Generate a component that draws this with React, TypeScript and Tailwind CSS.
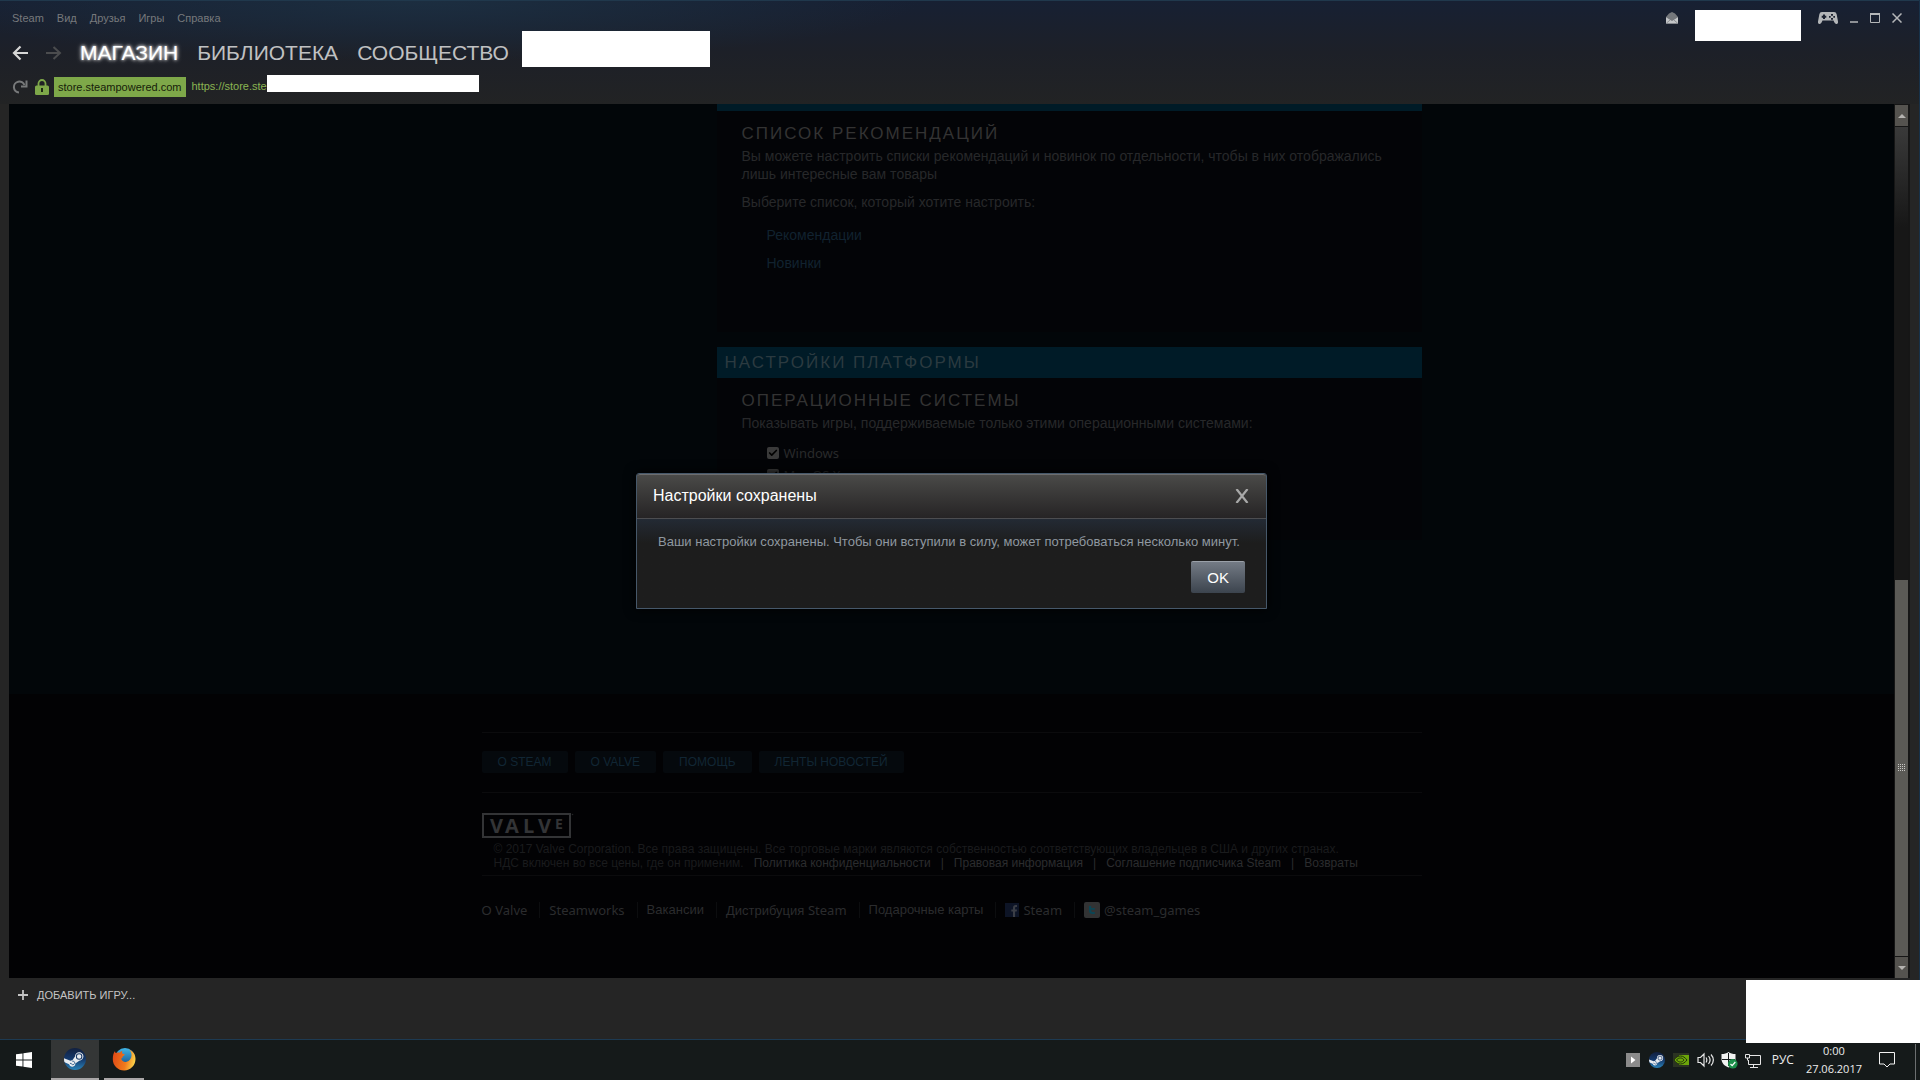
import type { ReactNode } from 'react';
import { Check } from 'lucide-react';

const menuItems = ['Steam', 'Вид', 'Друзья', 'Игры', 'Справка'];
const footerButtons = ['О STEAM', 'О VALVE', 'ПОМОЩЬ', 'ЛЕНТЫ НОВОСТЕЙ'];
const legalLinks = [
  'Политика конфиденциальности',
  'Правовая информация',
  'Соглашение подписчика Steam',
  'Возвраты',
];

function SteamLogo({ id, className }: { id: string; className: string }) {
  return (
    <svg viewBox="0 0 24 24" className={className} aria-hidden="true">
      <defs>
        <linearGradient id={id} x1="0" y1="0" x2="0" y2="1">
          <stop offset="0" stopColor="#12203f" />
          <stop offset="0.5" stopColor="#14386b" />
          <stop offset="1" stopColor="#2b83b8" />
        </linearGradient>
        <clipPath id={`${id}-clip`}>
          <circle cx="12" cy="12" r="12" />
        </clipPath>
      </defs>
      <circle cx="12" cy="12" r="12" fill={`url(#${id})`} />
      <g clipPath={`url(#${id}-clip)`}>
        <path d="M0 11.2 7 14a3.6 3.6 0 0 1 2-.5l3-4.3a4.6 4.6 0 1 1 4.700 4.600l-4.300 3.100a3.500 3.500 0 0 1-6.900.8L0 15.400Z" fill="#e8ebef" />
        <circle cx="16.500" cy="9.200" r="3" fill="#e8ebef" stroke="#1a3a68" strokeWidth="1.100" />
        <path d="m6.500 16.600 1.700.7a1.900 1.900 0 1 0 .9-2.800" fill="none" stroke="#1a4a7c" strokeWidth="0.900" />
      </g>
    </svg>
  );
}

function FirefoxLogo() {
  return (
    <svg viewBox="0 0 24 24" className="size-6" aria-hidden="true">
      <defs>
        <linearGradient id="globe" x1="0" y1="0" x2="0" y2="1">
          <stop offset="0" stopColor="#3fb6e8" />
          <stop offset="1" stopColor="#12427e" />
        </linearGradient>
        <linearGradient id="fox" x1="0" y1="0.300" x2="1" y2="0.500">
          <stop offset="0" stopColor="#e04a16" />
          <stop offset="0.600" stopColor="#f07a1c" />
          <stop offset="1" stopColor="#fbd44a" />
        </linearGradient>
      </defs>
      <circle cx="13" cy="11" r="10" fill="url(#globe)" />
      <path
        d="M3 4c0 1 .3 1.600.7 2.100C5 5.300 6.500 5.300 7.900 5.700c.5-.9 1.500-1.700 2.600-2-.8 1.200-.6 2.200.2 3 .9.300 1.800.3 2 .7-.2 1.200-1.700 1.500-2.300 2.300.3 1-.4 1.700-1.300 1.800.6 2.700 3 4 5.600 3.300 2.700-.7 4.700-3 4.800-6 .2-2.600-.8-4.600-2.500-6.200C21 4.200 23.500 7.500 23.500 12c0 6.300-5 11.500-11.300 11.500S.8 18.400.8 12.200C.8 9.300 1.300 6.200 3 4Z"
        fill="url(#fox)"
      />
    </svg>
  );
}

function TitleBar() {
  return (
    <div className="flex h-[34px] items-center justify-between pl-3 pr-[17px]">
      <nav className="flex gap-[13px] text-[11px] text-[#77797c]">
        {menuItems.map((item) => (
          <a key={item} href="#">
            {item}
          </a>
        ))}
      </nav>
      <div className="flex h-full items-center text-[#b4b6b8]">
        <button type="button" aria-label="Inbox">
          <svg viewBox="0 0 12 12" className="size-3">
            <path d="M0 5 3 1.500 6 0l3 1.500L12 5v6.500H0Z" fill="#74777b" />
            <path d="M0 5.200 6 9l6-3.800v6.300H0Z" fill="#c4c6c8" />
            <path d="M.5 11 4.200 8M11.500 11 7.800 8" stroke="#74777b" strokeWidth="0.700" />
          </svg>
        </button>
        <div className="ml-[17px] mt-[9px] h-[31px] w-[106px] self-start bg-white" />
        <button type="button" aria-label="Big Picture" className="ml-[17px]">
          <svg viewBox="0 0 20 12" className="w-5">
            <path
              d="M4 0h12c1.500 0 2.300.8 2.700 2.500L20 9.500c.2 1.500-.5 2.500-1.500 2.500-1.200 0-1.800-.8-3-3.500h-11C3.300 11.200 2.700 12 1.500 12 .5 12-.2 11 0 9.500l1.300-7C1.700.8 2.500 0 4 0Z"
              fill="#b4b6b8"
            />
            <path d="M5 2.500h2v1.200h1.300v2H7V7H5V5.700H3.700v-2H5ZM13 2h2v1.700h-2Zm0 4h2v1.700h-2Zm-2-2h1.700v1.700H11Zm4.300 0H17v1.700h-1.700Z" fill="#1c2230" />
          </svg>
        </button>
        <button type="button" aria-label="Minimize" className="ml-[11px]">
          <svg viewBox="0 0 10 10" className="size-[10px]">
            <path d="M1 9h8" stroke="currentColor" strokeWidth="1.500" />
          </svg>
        </button>
        <button type="button" aria-label="Maximize" className="ml-[11px]">
          <svg viewBox="0 0 10 10" className="size-[10px]">
            <path d="M.5 1v8.500h9V1" fill="none" stroke="currentColor" />
            <path d="M0 1h10" stroke="currentColor" strokeWidth="2" />
          </svg>
        </button>
        <button type="button" aria-label="Close window" className="ml-3">
          <svg viewBox="0 0 10 10" className="size-[10px]">
            <path d="m.5.500 9 9m0-9-9 9" stroke="currentColor" strokeWidth="1.500" />
          </svg>
        </button>
      </div>
    </div>
  );
}

function Navigation() {
  return (
    <div className="flex h-[35px] items-center pl-3 text-[21px] text-[#c0c1c2]">
      <button type="button" aria-label="Back">
        <svg viewBox="0 0 16 16" className="size-4" fill="none" stroke="#d6d6d6" strokeWidth="2.200">
          <path d="M8.500 1.500 2 8l6.500 6.500M2 8h14" />
        </svg>
      </button>
      <button type="button" aria-label="Forward" className="ml-[18px]">
        <svg viewBox="0 0 16 16" className="size-4" fill="none" stroke="#4b4c4e" strokeWidth="2">
          <path d="M7.500 2 14 8l-6.500 6M14 8H0" />
        </svg>
      </button>
      <a href="#" className="ml-[18px] text-white [text-shadow:0_0_3px_#fff,0_0_5px_#ccc]">
        МАГАЗИН
      </a>
      <a href="#" className="ml-[19px]">
        БИБЛИОТЕКА
      </a>
      <a href="#" className="ml-[19px]">
        СООБЩЕСТВО
      </a>
      <div className="mb-[3px] ml-[13px] h-9 w-[188px] shrink-0 self-end bg-white" />
    </div>
  );
}

function AddressBar() {
  return (
    <div className="flex h-[33px] items-center pl-3 text-[11px] text-[#8bb552]">
      <button type="button" aria-label="Reload">
        <svg viewBox="0 0 16 16" className="size-4" fill="none" stroke="#77797a" strokeWidth="2">
          <path d="M7 13.500A5.500 5.500 0 1 1 12.500 6" />
          <path d="M14.500 1.500V7.500H9" />
        </svg>
      </button>
      <svg viewBox="0 0 14 16" className="ml-[7px] h-4 w-[14px]" aria-hidden="true">
        <path d="M3.500 7V4.500a3.500 3.500 0 0 1 7 0V7" fill="none" stroke="#7ea849" strokeWidth="1.800" />
        <rect y="6.500" width="14" height="9.500" rx="1.500" fill="#7ea849" />
        <path d="M6 9h2v4H6Z" fill="#1f2a14" />
      </svg>
      <span className="ml-[5px] bg-[#7ea849] px-1 leading-5 text-[#16200a]">store.steampowered.com</span>
      <span className="ml-[6px]">https://store.ste</span>
      <div className="mt-[5px] h-[17px] w-[212px] self-start bg-white" />
    </div>
  );
}

function ScrollBar() {
  return (
    <div className="flex w-[16px] flex-col border-x border-[#161616] bg-[#161616] pr-px pt-px">
      <button type="button" aria-label="Scroll up" className="flex h-[21px] items-center justify-center bg-[#55534f]">
        <svg viewBox="0 0 8 4" className="w-2">
          <path d="M0 4 4 0l4 4Z" fill="#b5b3b0" />
        </svg>
      </button>
      <div className="mt-px flex-[452] bg-linear-to-b from-[#3a3a3a] to-[#171717] to-[100px]" />
      <div className="flex flex-[376] items-center justify-center bg-[#5b5a56]">
        <svg viewBox="0 0 8 8" className="size-2">
          <path d="M0 .5h8M0 2.500h8M0 4.500h8M0 6.500h8" stroke="#c9c8c5" strokeDasharray="1 1" />
        </svg>
      </div>
      <button type="button" aria-label="Scroll down" className="mt-px flex h-[21px] items-center justify-center bg-[#55534f]">
        <svg viewBox="0 0 8 4" className="w-2">
          <path d="m0 0 4 4 4-4Z" fill="#b5b3b0" />
        </svg>
      </button>
    </div>
  );
}

function SectionTitle({ children }: { children: ReactNode }) {
  return <h2 className="text-[17px] uppercase leading-5 tracking-[2px] text-[#333333]">{children}</h2>;
}

function PlatformOption({ id, label }: { id: string; label: string }) {
  return (
    <div className="flex h-[18px] items-center gap-[5px]">
      <span className="grid size-3 place-items-center">
        <input
          id={id}
          type="checkbox"
          defaultChecked
          className="col-start-1 row-start-1 size-3 appearance-none rounded-[2px] bg-[#3a3a3a]"
        />
        <Check className="pointer-events-none col-start-1 row-start-1 size-[10px] text-black" strokeWidth={4} />
      </span>
      <label htmlFor={id} className="font-['Noto_Sans'] text-[13px] text-[#292a2b]">
        {label}
      </label>
    </div>
  );
}

function Preferences() {
  return (
    <div className="ml-auto w-3/4">
      <section className="border-t-[7px] border-[#001b27] bg-[#030407] px-[25px] pb-[60px] pt-[13px] text-[14px] leading-[18px] text-[#27282a]">
        <SectionTitle>Список рекомендаций</SectionTitle>
        <p className="mt-[3px]">
          Вы можете настроить списки рекомендаций и новинок по отдельности, чтобы в них отображались лишь интересные
          вам товары
        </p>
        <p className="mt-[10px]">Выберите список, который хотите настроить:</p>
        <div className="ml-[25px] mt-[15px] flex flex-col items-start gap-[10px] text-[#11222f]">
          <a href="#">Рекомендации</a>
          <a href="#">Новинки</a>
        </div>
      </section>
      <section className="mt-[15px]">
        <div className="bg-[#001b27] px-2 text-[17px] uppercase leading-[31px] tracking-[2px] text-[#2b3a40]">
          Настройки платформы
        </div>
        <div className="bg-[#030407] px-[25px] pb-14 pt-[13px] text-[14px] leading-[18px] text-[#27282a]">
          <SectionTitle>Операционные системы</SectionTitle>
          <p className="mt-[3px]">Показывать игры, поддерживаемые только этими операционными системами:</p>
          <div className="ml-[25px] mt-3 flex flex-col gap-1">
            <PlatformOption id="os-windows" label="Windows" />
            <PlatformOption id="os-mac" label="Mac OS X" />
          </div>
        </div>
      </section>
    </div>
  );
}

function Latin({ children }: { children: ReactNode }) {
  return <span className="font-['Noto_Sans']">{children}</span>;
}

function FooterLink({ icon, children }: { icon?: ReactNode; children: ReactNode }) {
  return (
    <a
      href="#"
      className="flex h-4 items-center gap-1 border-r border-[#0c0d0f] pl-[9px] pr-3 first:pl-0 last:border-r-0"
    >
      {icon}
      <span>{children}</span>
    </a>
  );
}

function FacebookIcon() {
  return (
    <svg viewBox="0 0 14 14" className="size-[14px]" aria-hidden="true">
      <path d="M0 0h14v14H0Z" fill="#0d1426" />
      <path d="M8 14V8.500H6.300v-2H8V5c0-1.900 1-3 2.800-3H12v2h-.9c-.7 0-1 .3-1 1v1.500H12l-.3 2h-1.600V14Z" fill="#3b3e46" />
    </svg>
  );
}

function TwitterIcon() {
  return (
    <svg viewBox="0 0 16 16" className="size-4" aria-hidden="true">
      <rect width="16" height="16" rx="2" fill="#323334" />
      <path d="M5 4h2.200v1.900h3.600v1.900H7.200c0 1.600.4 2.300 1.600 2.300h2v2H8.500C6 12.100 5 10.700 5 8.500Z" fill="#0c4554" />
    </svg>
  );
}

function StoreFooter() {
  return (
    <footer className="bg-[#020204] pb-[60px] pt-[38px]">
      <div className="mx-auto w-[940px] max-w-full">
        <div className="flex gap-[7px] border-y border-[#0b0b0d] pb-[19px] pt-[18px]">
          {footerButtons.map((label) => (
            <a key={label} href="#" className="rounded-[2px] bg-[#05090d] px-4 text-[12px] leading-[22px] text-[#112634]">
              {label}
            </a>
          ))}
        </div>
        <div className="border-b border-[#0b0b0d] pb-[5px] pt-5">
          <svg viewBox="0 0 92 25" className="h-[25px] w-[92px]" role="img" aria-label="Valve">
            <rect x="1" y="1" width="87" height="23" fill="none" stroke="#333436" strokeWidth="2" />
            <g fill="#333436" fontFamily="Open Sans, sans-serif" fontWeight="bold" fontSize="20">
              <text x="8" y="20">V</text>
              <text x="23" y="20">A</text>
              <text x="41" y="20">L</text>
              <text x="56" y="20">V</text>
              <text x="73" y="16" fontSize="14">E</text>
            </g>
            <circle cx="90.500" cy="1.500" r="0.800" fill="#232426" />
          </svg>
          <div className="mt-1 pl-3 text-[12px] leading-[14px] text-[#1a1b1d]">
            <p>
              © 2017 Valve Corporation. Все права защищены. Все торговые марки являются собственностью соответствующих
              владельцев в США и других странах.
            </p>
            <div className="flex gap-[10px] text-[#2b2c2e]">
              <span className="text-[#1a1b1d]">НДС включен во все цены, где он применим.</span>
              {legalLinks.map((link, index) => (
                <span key={link} className="flex gap-[10px]">
                  {index > 0 && <span>|</span>}
                  <a href="#">{link}</a>
                </span>
              ))}
            </div>
          </div>
        </div>
        <nav className="flex pt-[26px] text-[13px] leading-4 text-[#2b2c2e]">
          <FooterLink>
            О <Latin>Valve</Latin>
          </FooterLink>
          <FooterLink>
            <Latin>Steamworks</Latin>
          </FooterLink>
          <FooterLink>Вакансии</FooterLink>
          <FooterLink>
            Дистрибуция <Latin>Steam</Latin>
          </FooterLink>
          <FooterLink>Подарочные карты</FooterLink>
          <FooterLink icon={<FacebookIcon />}>
            <Latin>Steam</Latin>
          </FooterLink>
          <FooterLink icon={<TwitterIcon />}>
            <Latin>@steam_games</Latin>
          </FooterLink>
        </nav>
      </div>
    </footer>
  );
}

function SavedDialog() {
  return (
    <div
      role="dialog"
      aria-labelledby="dialog-title"
      className="min-w-[631px] rounded-t-[3px] border border-[#46586a] bg-[#1d1d1d] shadow-[0_0_12px_#000]"
    >
      <div className="flex h-[45px] items-center justify-between rounded-t-[3px] border-b border-t border-b-[#4c4d50] border-t-[#6d6d6e] bg-linear-to-b from-[#4a4a48] to-[#262425] pb-[2px] pl-4 pr-[17px]">
        <h1 id="dialog-title" className="text-[16px] text-white">
          Настройки сохранены
        </h1>
        <button type="button" aria-label="Close">
          <svg viewBox="0 0 14 14" className="size-[14px]">
            <path d="m1.500 0 11 14m0-14-11 14" stroke="#a8a8a8" strokeWidth="2.200" />
          </svg>
        </button>
      </div>
      <div className="flex flex-col bg-linear-to-b from-[#232a34] to-[#1d1d1d] to-[24px] px-[21px] pb-[15px] pt-[14px]">
        <p className="text-[13px] leading-[18px] text-[#8f98a0]">
          Ваши настройки сохранены. Чтобы они вступили в силу, может потребоваться несколько минут.
        </p>
        <button
          type="button"
          className="mt-[10px] self-end rounded-[2px] border-t border-[#9aa0a8] bg-linear-to-b from-[#747b85] to-[#3c444e] px-4 text-[15px] leading-[31px] text-white"
        >
          OK
        </button>
      </div>
    </div>
  );
}

function Tray() {
  return (
    <div className="flex items-center">
      <svg viewBox="0 0 14 14" className="size-[14px]" aria-hidden="true">
        <path d="M0 0h14v14H0Z" fill="#8b8b8b" />
        <path d="M5 3.500 9.500 7 5 10.500Z" fill="#fff" />
      </svg>
      <SteamLogo id="steam-tray" className="ml-[9px] size-4" />
      <svg viewBox="0 0 16 14" className="ml-2 h-[14px] w-4" aria-hidden="true">
        <path d="M0 0h16v14H0Z" fill="#2b3322" />
        <path d="M6 2h10v10H6Z" fill="#6ca50a" />
        <path d="M1 7c2-3 4-4 6.500-4S12 4.500 14 7c-2 2.500-4 4-6.500 4S3 10 1 7Z" fill="#6ca50a" stroke="#22330a" />
        <path d="M3.500 7c1-1.500 2.300-2 4-2s2.500.8 3.500 2c-1 1.300-2 2-3.500 2S4.500 8.300 3.500 7Z" fill="none" stroke="#22330a" />
      </svg>
      <svg viewBox="0 0 18 16" className="ml-2 h-4 w-[18px]" fill="none" stroke="#e6e6e6" strokeWidth="1.200" aria-hidden="true">
        <path d="M1 5.500h2.500L7 2v12l-3.500-3.500H1ZM9 5.500c1 1.500 1 3.500 0 5M11.500 4c2 2.500 2 5.500 0 8M14 2.500c3 3.500 3 7.500 0 11" />
      </svg>
      <svg viewBox="0 0 17 17" className="ml-[6px] size-[17px]" aria-hidden="true">
        <path d="M7.500 0c2 1.500 4 2 7 2v5c0 4-3 7-7 8.500C3.500 14 .5 11 .5 7V2c3 0 5-.5 7-2Z" fill="#f2f2f2" />
        <path d="M7.500 1v13M1 7.500h13" stroke="#15191a" />
        <circle cx="11.800" cy="11.800" r="4.800" fill="#1c8f4a" />
        <path d="m9.500 12 1.700 1.700L14.300 10" fill="none" stroke="#fff" strokeWidth="1.200" />
      </svg>
      <svg viewBox="0 0 16 15" className="ml-[7px] h-[15px] w-4" fill="none" stroke="#e6e6e6" aria-hidden="true">
        <path d="M5 2.500h10.500v9H3.500V7M5 14.500h8M8.500 11.500v3M.5 1.500h4V5h-4ZM2.500 5v2.500" />
      </svg>
      <span className="ml-[11px] font-['Open_Sans'] text-[12px] text-[#ececec]">РУС</span>
      <div className="ml-3 pb-px text-center font-['Open_Sans'] text-[11px] leading-[18px] text-[#ececec]">
        <div>0:00</div>
        <div>27.06.2017</div>
      </div>
      <svg viewBox="0 0 16 16" className="ml-[17px] size-4" fill="none" stroke="#f2f2f2" aria-hidden="true">
        <path d="M.5.500h15v11.500H11L8 15l-3-3H.5Z" />
      </svg>
      <div className="ml-5 mr-1 h-9 w-px self-end bg-[#6c6f70]" />
    </div>
  );
}

function Taskbar() {
  return (
    <div className="flex h-10 justify-between bg-[#151a1a]">
      <div className="flex">
        <button type="button" aria-label="Start" className="flex w-[51px] items-center pl-4">
          <svg viewBox="0 0 16 16" className="size-4">
            <path d="M0 2.300 6.500 1.400v6.100H0ZM7.400 1.200 16 0v7.500H7.400ZM0 8.400h6.500v6.200L0 13.700ZM7.400 8.400H16V16l-8.600-1.200Z" fill="#fff" />
          </svg>
        </button>
        <button type="button" aria-label="Steam" className="flex w-12 items-center justify-center border-b-2 border-[#aaa7a8] bg-[#343636]">
          <SteamLogo id="steam-task" className="size-[22px]" />
        </button>
        <button type="button" aria-label="Firefox" className="ml-[5px] flex w-10 items-center justify-center border-b-2 border-[#aaa7a8]">
          <FirefoxLogo />
        </button>
      </div>
      <Tray />
    </div>
  );
}

export default function App() {
  return (
    <div className="flex min-h-screen flex-col bg-[#252525] font-['Liberation_Sans',sans-serif]">
      <div className="relative flex flex-1 flex-col border-r border-[#17324a]">
        <header className="border-t border-[#20384c] bg-[radial-gradient(ellipse_500px_60px_at_420px_0px,#1c2e40,transparent),linear-gradient(to_bottom,#172033,#1d2028_50%,#222324)] pb-px">
          <TitleBar />
          <Navigation />
          <AddressBar />
        </header>
        <div className="mx-[9px] flex flex-1">
          <main className="relative flex flex-1 flex-col bg-[#020609]">
            <div className="mx-auto w-[940px] max-w-full flex-1">
              <Preferences />
            </div>
            <StoreFooter />
            <div className="absolute inset-0 flex items-center justify-center">
              <SavedDialog />
            </div>
          </main>
          <ScrollBar />
        </div>
        <div className="h-[62px] border-b border-[#1d3a52] px-[18px] pt-[11px]">
          <button type="button" className="flex items-center gap-[9px] text-[11px] leading-3 text-[#c4c4c4]">
            <svg viewBox="0 0 10 10" className="size-[10px]">
              <path d="M5 0v10M0 5h10" stroke="#c4c4c4" strokeWidth="1.800" />
            </svg>
            ДОБАВИТЬ ИГРУ...
          </button>
        </div>
        <div className="absolute -bottom-[3px] -right-px z-10 h-[63px] w-[174px] bg-white" />
      </div>
      <Taskbar />
    </div>
  );
}
